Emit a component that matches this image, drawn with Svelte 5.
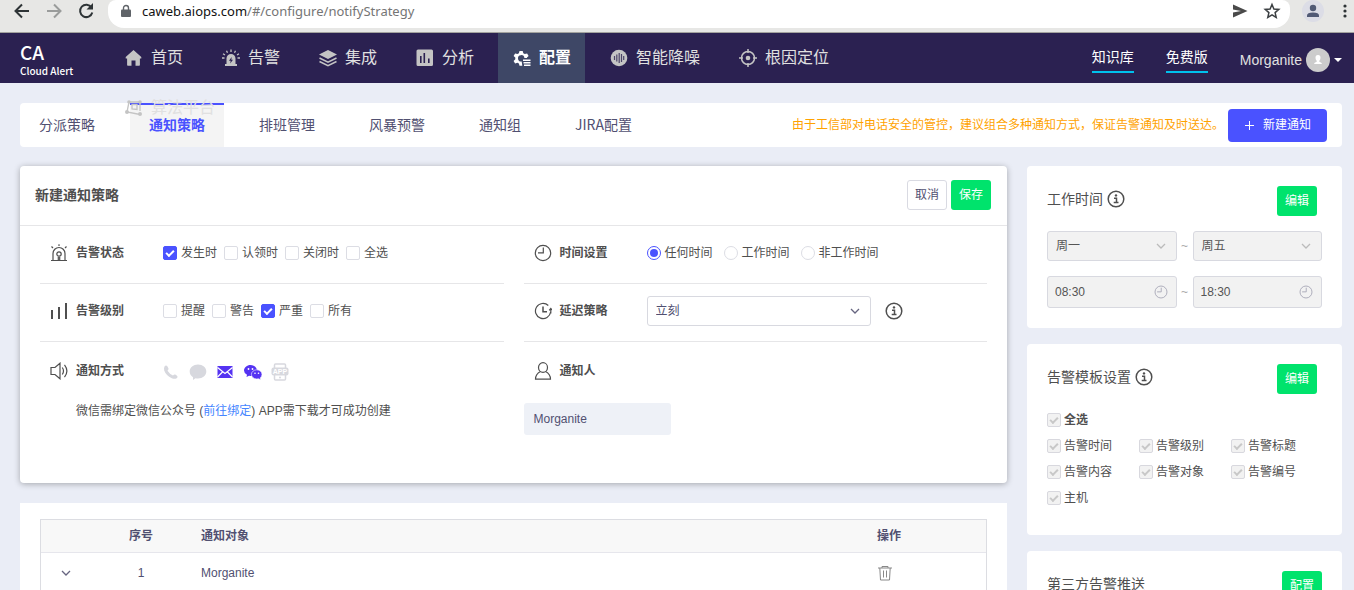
<script lang="ts">
  // Top navigation
  const navItems = [
    { name: "首页", icon: "home" },
    { name: "告警", icon: "alarm" },
    { name: "集成", icon: "layers" },
    { name: "分析", icon: "chart" },
    { name: "配置", icon: "config" },
    { name: "智能降噪", icon: "noise" },
    { name: "根因定位", icon: "target" },
    { name: "算法平台", icon: "graph" }
  ];

  const tabs = ["分派策略", "通知策略", "排班管理", "风暴预警", "通知组", "JIRA配置"];

  // Form state
  let activeNav = $state("配置");
  let activeTab = $state("通知策略");
  let timeType = $state("任何时间");
  let delay = $state("立刻");

  let statuses = $state([
    { name: "发生时", checked: true },
    { name: "认领时", checked: false },
    { name: "关闭时", checked: false },
    { name: "全选", checked: false }
  ]);

  let levels = $state([
    { name: "提醒", checked: false },
    { name: "警告", checked: false },
    { name: "严重", checked: true },
    { name: "所有", checked: false }
  ]);

  const timeTypes = ["任何时间", "工作时间", "非工作时间"];
  const templateFields = ["告警时间", "告警级别", "告警标题", "告警内容", "告警对象", "告警编号", "主机"];
  const rows = [{ id: 1, target: "Morganite" }];
</script>

{#snippet navIcon(icon: string)}
  <svg class="nav-icon" viewBox="0 0 18 18" fill="currentColor" aria-hidden="true">
    {#if icon === "home"}
      <path d="M8.500 1 .7 8v1.400h1.400V16q0 .8.800.800h3.600v-5.400h4v5.400h3.600q.8 0 .8-.8V9.400h1.400V8z" />
    {:else if icon === "alarm"}
      <path fill-rule="evenodd" d="M4.500 15V9.500a4.500 4.500 0 0 1 9 0V15h1.500v2H3v-2zM9.700 8 7 11.800h1.700L8.200 14.500 11 10.700H9.300z" />
      <path d="M9 .5V3M4.500 1.700l1 2M13.500 1.700l-1 2M1 4.800l2 1.200M17 4.800 15 6M0 9h2.500M15.500 9H18" fill="none" stroke="currentColor" stroke-width="1.300" />
    {:else if icon === "layers"}
      <path d="M9 1 18 5.500 9 10 0 5.500z" />
      <path d="M.5 9 9 13.200 17.500 9M.5 12.500 9 16.700l8.500-4.200" fill="none" stroke="currentColor" stroke-width="1.500" />
    {:else if icon === "chart"}
      <path fill-rule="evenodd" d="M2 .5h13.500q1.500 0 1.500 1.500v13.500q0 1.500-1.500 1.500H2q-1.500 0-1.500-1.500V2Q.5.5 2 .5zM4 7v7h1.600V7zm3.500-3v10h1.600V4zM12 9.500V14h1.600V9.500z" />
    {:else if icon === "config"}
      <path d="M9.300 16.800H6.500l-.6-2.200-1.500-.8-2.300.7-1.500-2.600 1.700-1.600V8.600L.6 7l1.500-2.600 2.300.7 1.500-.8.600-2.300h3.200l.6 2.300 1.500.8 2.300-.7L15.600 7 14 8.600v.5h-2.600a3.200 3.200 0 1 0-2.700 3.400z" />
      <path d="M10 10.500h7.500v1.500H10zM10.500 13h7v1.500h-7zM11 15.500h6.500V17H11z" />
    {:else if icon === "noise"}
      <circle cx="9" cy="9" r="8.300" />
      <path d="M4.500 7v4M6.800 5.500v7M9.200 4v10M11.500 5v8M13.700 7v4" fill="none" stroke="#4c4468" stroke-width="1.200" />
    {:else if icon === "target"}
      <circle cx="9" cy="9" r="6.500" fill="none" stroke="currentColor" stroke-width="1.500" />
      <circle cx="9" cy="9" r="2.300" />
      <path d="M9 0v4M9 14v4M0 9h4M14 9h4" stroke="currentColor" stroke-width="1.500" />
    {:else}
      <path d="M4 3h11v9M4 3 2 13l13 2.500M7 5.500h5v5l-5-.5z" fill="none" stroke="currentColor" stroke-width="1.300" />
      <circle cx="4" cy="3" r="1.800" /><circle cx="15" cy="3" r="1.800" /><circle cx="2" cy="13" r="2" /><circle cx="15" cy="15" r="2" />
    {/if}
  </svg>
{/snippet}

{#snippet infoIcon()}
  <svg class="info" viewBox="0 0 18 18" aria-hidden="true">
    <circle cx="9" cy="9" r="7.800" fill="none" stroke="#4f4f4f" stroke-width="1.500" />
    <path d="M7 8.200h2.500v4M6.700 12.600h4.800" fill="none" stroke="#4f4f4f" stroke-width="1.500" />
    <circle cx="9" cy="5.400" r="1.200" fill="#4f4f4f" />
  </svg>
{/snippet}

{#snippet clock()}
  <svg class="clock" viewBox="0 0 18 18" fill="none" stroke="currentColor" stroke-width="1.200" aria-hidden="true">
    <circle cx="9" cy="9" r="7.700" />
    <path d="M9.300 3.500v5.300H4" />
  </svg>
{/snippet}

{#snippet chevron()}
  <svg class="chevron" viewBox="0 0 10 10" fill="none" stroke="currentColor" stroke-width="1.300" aria-hidden="true">
    <path d="M1 3l4 4 4-4" />
  </svg>
{/snippet}

<div class="page">
  <div class="browser">
    <button class="tool" aria-label="Back">
      <svg viewBox="0 0 20 20" fill="none" stroke="#2e3436" stroke-width="2"><path d="M17 11H4M10 4.500 3.500 11l6.500 6.500" /></svg>
    </button>
    <button class="tool" aria-label="Forward">
      <svg viewBox="0 0 20 20" fill="none" stroke="#9a9c9b" stroke-width="2"><path d="M3 11h13M10 4.500l6.500 6.500-6.500 6.500" /></svg>
    </button>
    <button class="tool" aria-label="Reload">
      <svg viewBox="0 0 20 20" fill="none" stroke="#2e3436" stroke-width="2"><path d="M15.500 7.500a6.200 6.200 0 1 0 .8 5" /><path d="M17 3v6.500h-6.500z" fill="#2e3436" stroke="none" /></svg>
    </button>
    <div class="address">
      <svg class="lock" viewBox="0 0 10 14"><path d="M1 5.500h8q1 0 1 1v5.500q0 1-1 1H1q-1 0-1-1V6.500q0-1 1-1z" fill="#5f6368" /><path d="M2.500 6V4a2.500 2.500 0 0 1 5 0v2" fill="none" stroke="#5f6368" stroke-width="1.400" /></svg>
      <div class="url"><span>caweb.aiops.com</span>/#/configure/notifyStrategy</div>
      <button class="tool" aria-label="Send">
        <svg viewBox="0 0 20 20" fill="#4a4a4a"><path d="M3 3.500 17.500 10 3 16.500v-5L11 10 3 8.500z" /></svg>
      </button>
      <button class="tool" aria-label="Bookmark">
        <svg viewBox="0 0 20 20" fill="none" stroke="#3c4043" stroke-width="1.500"><path d="m10 3.500 1.900 4.500 4.900.4-3.700 3.200 1.100 4.800-4.200-2.600-4.200 2.600 1.100-4.800-3.700-3.200 4.900-.4z" /></svg>
      </button>
    </div>
    <button class="profile" aria-label="Profile">
      <svg viewBox="0 0 20 20" fill="#515a75"><circle cx="10" cy="7" r="3.200" /><path d="M4 16v-1.500q0-3 6-3t6 3V16z" /></svg>
    </button>
    <button class="dots" aria-label="Menu">
      <svg viewBox="0 0 4 16" fill="#2e3436"><circle cx="2" cy="3" r="1.600" /><circle cx="2" cy="8" r="1.600" /><circle cx="2" cy="13" r="1.600" /></svg>
    </button>
  </div>

  <header>
    <div class="logo">
      <strong>CA</strong>
      <span>Cloud Alert</span>
    </div>
    <nav>
      {#each navItems as item}
        <a href="#{item.icon}" class:active={activeNav === item.name} onclick={() => (activeNav = item.name)}>
          {@render navIcon(item.icon)}
          {item.name}
        </a>
      {/each}
    </nav>
    <div class="account">
      <a href="#docs">知识库</a>
      <a href="#plan">免费版</a>
      <button class="user">
        Morganite
        <svg class="avatar" viewBox="0 0 24 24"><circle cx="12" cy="12" r="12" fill="#ccc" /><path d="M12 7q2.700 0 2.500 3-.2 2-1.200 2.800v1q2.700.7 2.700 2.200H8q0-1.500 2.700-2.200v-1q-1-.8-1.200-2.800-.2-3 2.500-3z" fill="#fff" /></svg>
        <span class="caret"></span>
      </button>
    </div>
  </header>

  <div class="tabs">
    {#each tabs as tab}
      <button class="tab" class:active={activeTab === tab} onclick={() => (activeTab = tab)}>{tab}</button>
    {/each}
    <p class="warning">由于工信部对电话安全的管控，建议组合多种通知方式，保证告警通知及时送达。</p>
    <button class="create">
      <svg viewBox="0 0 10 10" stroke="#fff" stroke-width="1"><path d="M5.500 1v9M1 5.500h9" /></svg>
      新建通知
    </button>
  </div>

  <main>
    <div class="left">
      <form class="card strategy" onsubmit={(e) => e.preventDefault()}>
        <div class="strategy-head">
          <h2>新建通知策略</h2>
          <button type="button" class="cancel">取消</button>
          <button type="submit" class="green">保存</button>
        </div>

        <div class="strategy-body">
          <div class="column">
            <div class="row">
              <svg class="row-icon" viewBox="0 0 18 18"><path d="M3 16.500V9.500a6 6 0 0 1 12 0v7M1 16.500h16M8.300 16.500v-3.800M9.700 16.500v-3.800M9 .3V2M1.500 2.500l1.500 1.500M16.500 2.500 15 4" /><circle cx="9" cy="10" r="2.200" /></svg>
              <span class="label">告警状态</span>
              <div class="options">
                {#each statuses as s}
                  <label><input type="checkbox" bind:checked={s.checked} />{s.name}</label>
                {/each}
              </div>
            </div>
            <div class="row">
              <svg class="row-icon bars" viewBox="0 0 18 18"><path d="M2 8v9M9 5v12M16 1v16" /></svg>
              <span class="label">告警级别</span>
              <div class="options">
                {#each levels as l}
                  <label><input type="checkbox" bind:checked={l.checked} />{l.name}</label>
                {/each}
              </div>
            </div>
            <div class="row">
              <svg class="row-icon" viewBox="0 0 18 18"><path d="M1 5.500h4L10 1.200v15.600L5 12.500H1zM12.300 5.500q2.400 3.500 0 7M14.500 2.800q4.800 6.200 0 12.400" /></svg>
              <span class="label">通知方式</span>
              <div class="methods">
                <button type="button" aria-label="电话">
                  <svg viewBox="0 0 18 18" fill="#d7d8de"><path d="M1.500 3.500Q3 1.500 4.500 3.500l1 2q.3 1-1 2.300Q6.500 11 10 12.500q1.200-1.500 2.300-1l1.700 1.200q1.500 1.200-.3 2.500-2 1.300-4.900 0Q3 12.500 1.200 7.500.7 4.800 1.500 3.500z" /></svg>
                </button>
                <button type="button" aria-label="短信">
                  <svg viewBox="0 0 18 18" fill="#d7d8de"><path d="M8 1.500c4.700 0 8.300 3.100 8.300 7s-3.600 7-8.300 7q-1.200 0-2.500-.3L3 17v-2.800Q-.3 12.200-.3 8.500c0-3.900 3.600-7 8.300-7z" /></svg>
                </button>
                <button type="button" aria-label="邮件">
                  <svg viewBox="0 0 18 18"><path d="M.5 3h15v12H.5z" fill="#5533f2" /><path d="m.5 4.500 7.500 6 7.500-6M.5 14l5-5M15.500 14l-5-5" fill="none" stroke="#fff" stroke-width="1.200" /></svg>
                </button>
                <button type="button" aria-label="微信">
                  <svg viewBox="0 0 18 18"><path d="M6.500 2C10 2 13 4.500 13 7.500S10 13 6.500 13l-1.500-.2L2.500 14l.5-2.300Q0 10.300 0 7.500C0 4.500 3 2 6.500 2z" fill="#5533f2" /><path d="M12.700 6.800c3 0 5.300 2.200 5.300 4.600q0 2-1.700 3.500l.4 1.900-2.200-1-1.800.2c-3 0-5.300-2.200-5.300-4.600s2.300-4.600 5.300-4.600z" fill="#5533f2" stroke="#fff" stroke-width=".6" /><g fill="#fff"><circle cx="4.500" cy="6" r=".9" /><circle cx="8.500" cy="6" r=".9" /><circle cx="11" cy="10.200" r=".8" /><circle cx="14.500" cy="10.200" r=".8" /></g></svg>
                </button>
                <button type="button" aria-label="APP">
                  <svg viewBox="0 0 18 18"><path d="M3.500 5V2q0-1 1-1h9q1 0 1 1v3M3.500 12v4q0 1 1 1h9q1 0 1-1v-4" fill="none" stroke="#d7d8de" stroke-width="1.500" /><rect x=".5" y="4.500" width="17" height="8" rx="2" fill="#d7d8de" /><circle cx="9" cy="14.500" r="1" fill="#d7d8de" /><text x="9" y="11" text-anchor="middle" font-size="7" font-weight="bold" fill="#fff">APP</text></svg>
                </button>
              </div>
            </div>
            <p class="hint">微信需绑定微信公众号 (<a href="#bind">前往绑定</a>) APP需下载才可成功创建</p>
          </div>

          <div class="column">
            <div class="row">
              <span class="row-icon">{@render clock()}</span>
              <span class="label">时间设置</span>
              <div class="options radios">
                {#each timeTypes as t}
                  <label><input type="radio" name="time" value={t} bind:group={timeType} />{t}</label>
                {/each}
              </div>
            </div>
            <div class="row">
              <svg class="row-icon" viewBox="0 0 18 18"><path d="M14.300 3.500A7.600 7.600 0 1 0 16.600 10M16.800 6.500v5M15.200 8.300 16.800 6.500l1.200 1.500" /><path d="M9 4.500v5.300h4" stroke-width="1.500" /></svg>
              <label class="label" for="delay">延迟策略</label>
              <div class="select delay">
                <select id="delay" bind:value={delay}>
                  <option>立刻</option>
                </select>
                {@render chevron()}
              </div>
              {@render infoIcon()}
            </div>
            <div class="row">
              <svg class="row-icon" viewBox="0 0 18 18"><ellipse cx="9" cy="5.500" rx="4.500" ry="4.800" /><path d="M6.500 9.500Q1.500 12 1.500 17.200h15q0-5.200-5-7.700" /></svg>
              <span class="label">通知人</span>
            </div>
            <div class="person">Morganite</div>
          </div>
        </div>
      </form>

      <section class="list">
        <table>
          <thead>
            <tr>
              <th class="expand"></th>
              <th class="index">序号</th>
              <th>通知对象</th>
              <th class="action">操作</th>
            </tr>
          </thead>
          <tbody>
            {#each rows as row}
              <tr>
                <td class="expand"><button aria-label="展开">{@render chevron()}</button></td>
                <td class="index">{row.id}</td>
                <td>{row.target}</td>
                <td class="action">
                  <button aria-label="删除">
                    <svg class="trash" viewBox="0 0 16 16" fill="none" stroke="#888"><path d="M1 3h14M5 3V1.500h6V3M2.800 3l.7 12h9l.7-12M6.500 5.500v7M9.500 5.500v7" /></svg>
                  </button>
                </td>
              </tr>
            {/each}
          </tbody>
        </table>
      </section>
    </div>

    <aside>
      <section class="card side">
        <div class="side-head">
          <h3>工作时间</h3>
          {@render infoIcon()}
          <button class="green inset">编辑</button>
        </div>
        <div class="range">
          <div class="select">
            <select aria-label="开始日" disabled><option>周一</option></select>
            {@render chevron()}
          </div>
          <span>~</span>
          <div class="select">
            <select aria-label="结束日" disabled><option>周五</option></select>
            {@render chevron()}
          </div>
        </div>
        <div class="range">
          <div class="select time">
            <input type="text" aria-label="开始时间" value="08:30" disabled />
            {@render clock()}
          </div>
          <span>~</span>
          <div class="select time">
            <input type="text" aria-label="结束时间" value="18:30" disabled />
            {@render clock()}
          </div>
        </div>
      </section>

      <section class="card side template">
        <div class="side-head">
          <h3>告警模板设置</h3>
          {@render infoIcon()}
          <button class="green inset">编辑</button>
        </div>
        <div class="fields">
          <label class="all"><input type="checkbox" checked disabled />全选</label>
          {#each templateFields as field}
            <label><input type="checkbox" checked disabled />{field}</label>
          {/each}
        </div>
      </section>

      <section class="card side">
        <div class="side-head">
          <h3>第三方告警推送</h3>
          <button class="green">配置</button>
        </div>
      </section>
    </aside>
  </main>
</div>

<style>
  :global(body) {
    margin: 0;
    background: #eaedf6;
  }

  .page {
    height: 100vh;
    overflow: hidden;
    font-family: "Liberation Sans", "Noto Sans CJK SC", sans-serif;
    font-size: 12px;
    line-height: 18px;
    color: #4f4f4f;
  }

  .page *,
  .page *::before {
    box-sizing: border-box;
  }

  button,
  input,
  select {
    font: inherit;
    color: inherit;
    margin: 0;
  }

  button {
    padding: 0;
    border: none;
    background: none;
    cursor: pointer;
  }

  svg {
    display: block;
    flex: none;
  }

  h2,
  h3,
  p {
    margin: 0;
  }

  /* Browser toolbar */
  .browser {
    display: flex;
    align-items: flex-start;
    gap: 12px;
    height: 33px;
    padding: 0 7px 0 12px;
    background: #e7e7e5;
    border-bottom: 1px solid #a3a39f;
  }

  .tool svg {
    width: 20px;
    height: 20px;
  }

  .address {
    display: flex;
    align-items: center;
    gap: 12px;
    flex: 1;
    height: 28px;
    padding: 0 8px 6px 13px;
    background: #fff;
    border-radius: 8px 8px 16px 16px;
  }

  .lock {
    width: 10px;
    height: 14px;
  }

  .url {
    flex: 1;
    margin-left: -1px;
    font-family: "Noto Sans", sans-serif;
    font-size: 13px;
    color: #757575;
  }

  .url span {
    color: #111;
  }

  .profile {
    background: #dcdde6;
    border-radius: 50%;
  }

  .profile svg {
    width: 20px;
    height: 20px;
    margin: 1px;
  }

  .dots svg {
    width: 4px;
    height: 16px;
    margin: 3px 0 0 7px;
  }

  /* Header */
  header {
    display: flex;
    height: 50px;
    padding: 0 12px 0 20px;
    background: #2b2151;
    color: #e0e0e0;
  }

  .logo {
    width: 90px;
    padding-top: 6px;
    font-family: "Noto Sans CJK SC", sans-serif;
    font-weight: 500;
    color: #fff;
  }

  .logo strong,
  .logo span {
    display: block;
  }

  .logo strong {
    font-size: 19px;
    font-weight: 500;
    line-height: 26px;
  }

  .logo span {
    font-size: 10px;
    line-height: 12px;
  }

  /* items that do not fit wrap below the bar, over the page */
  nav {
    display: flex;
    flex-wrap: wrap;
    align-content: flex-start;
    column-gap: 10px;
    flex: 1;
    z-index: 1;
  }

  nav a {
    display: flex;
    align-items: center;
    gap: 8px;
    height: 50px;
    padding: 0 14px 0 15px;
    font-size: 16px;
    color: #e0e0e0;
    text-decoration: none;
  }

  nav a.active {
    background: #3e4766;
    color: #fff;
    font-weight: bold;
  }

  .nav-icon {
    width: 18px;
    height: 18px;
    color: #c4c4c4;
  }

  .active .nav-icon {
    color: #fff;
  }

  .account {
    display: flex;
    align-items: center;
    gap: 32px;
    margin-left: 160px;
  }

  .account a {
    padding: 4px 0;
    border-bottom: 2px solid #00c1ec;
    font-size: 14px;
    line-height: 20px;
    color: #fff;
    text-decoration: none;
  }

  .user {
    display: flex;
    align-items: center;
    gap: 4px;
    padding-top: 3px;
    font-size: 14px;
  }

  .avatar {
    width: 24px;
    height: 24px;
  }

  .caret {
    border: 4px solid transparent;
    border-top-color: #fff;
    border-bottom: none;
  }

  /* Tabs */
  .tabs {
    display: flex;
    align-items: center;
    gap: 16px;
    height: 44px;
    margin: 20px 12px 19px 20px;
    padding-right: 15px;
    background: #fff;
    border-radius: 4px;
  }

  .tab {
    height: 44px;
    padding: 0 19px 2px;
    font-family: "Noto Sans CJK SC", sans-serif;
    font-size: 14px;
    color: #515071;
  }

  .tab.active {
    background: #f4f4f4;
    box-shadow: inset 0 2px #4a52ff;
    color: #4a52ff;
    font-weight: bold;
  }

  .warning {
    flex: 1;
    text-align: right;
    color: #ffa200;
  }

  .create {
    display: flex;
    align-items: center;
    justify-content: center;
    gap: 9px;
    width: 99px;
    height: 33px;
    margin-left: -12px;
    background: #4a52ff;
    border-radius: 4px;
    color: #fff;
  }

  .create svg {
    width: 10px;
    height: 10px;
  }

  /* Layout */
  main {
    display: flex;
    align-items: flex-start;
    gap: 20px;
    padding: 0 12px 20px 20px;
  }

  .left {
    flex: 1;
  }

  aside {
    display: flex;
    flex-direction: column;
    gap: 16px;
    width: 315px;
  }

  .card {
    background: #fff;
    border-radius: 4px;
  }

  .green,
  .cancel {
    width: 40px;
    height: 30px;
    border-radius: 3px;
  }

  .green {
    background: #00e36c;
    color: #fff;
  }

  .cancel {
    border: 1px solid #d9dae2;
    color: #515071;
  }

  /* Strategy form */
  .strategy {
    min-height: 317px;
    box-shadow: 0 1px 6px rgba(0, 0, 0, 0.3);
  }

  .strategy-head {
    display: flex;
    align-items: center;
    gap: 4px;
    height: 60px;
    padding: 0 16px 1px 15px;
    border-bottom: 1px solid #e6e6e8;
  }

  .strategy-head h2 {
    flex: 1;
    font-size: 14px;
  }

  .strategy-body {
    display: flex;
    gap: 20px;
    padding: 0 20px;
  }

  .column {
    flex: 1;
  }

  .row {
    display: flex;
    align-items: center;
    height: 58px;
    padding: 0 0 3px 10px;
    border-bottom: 1px solid #e6e6e8;
  }

  .row:nth-child(3) {
    padding-bottom: 0;
    border-bottom: none;
  }

  .row-icon {
    width: 18px;
    height: 18px;
    margin-right: 8px;
    fill: none;
    stroke: #4f4f4f;
    stroke-width: 1.200;
  }

  .bars {
    stroke-width: 2;
  }

  .clock {
    width: 100%;
    height: 100%;
  }

  .label {
    width: 87px;
    font-weight: bold;
  }

  .options {
    display: flex;
    gap: 7px;
  }

  .radios {
    gap: 11px;
  }

  .options label,
  .fields label {
    display: flex;
    align-items: center;
    gap: 4px;
  }

  input[type="checkbox"],
  input[type="radio"] {
    display: grid;
    place-items: center;
    width: 14px;
    height: 14px;
    appearance: none;
    border: 1px solid #dcdde4;
    border-radius: 2px;
    background: #fff;
  }

  input[type="checkbox"]:checked {
    background: #4a52ff;
    border-color: #4a52ff;
  }

  input[type="checkbox"]:checked::before {
    content: "";
    width: 8px;
    height: 5px;
    margin-bottom: 2px;
    border: solid #fff;
    border-width: 0 0 2px 2px;
    transform: rotate(-45deg);
  }

  input[type="checkbox"]:disabled {
    background: #f2f2f2;
    border-color: #d8d8de;
  }

  input[type="checkbox"]:disabled::before {
    border-color: #c8c8c8;
  }

  input[type="radio"] {
    border-radius: 50%;
  }

  input[type="radio"]:checked {
    border-color: #4a52ff;
  }

  input[type="radio"]:checked::before {
    content: "";
    width: 8px;
    height: 8px;
    background: #4a52ff;
    border-radius: 50%;
  }

  .methods {
    display: flex;
    gap: 9px;
    padding-top: 2px;
  }

  .methods svg {
    width: 18px;
    height: 18px;
    overflow: visible;
  }

  .hint {
    padding: 2px 0 0 36px;
  }

  .hint a {
    color: #4585ff;
    text-decoration: none;
  }

  .select {
    display: flex;
    position: relative;
    flex: 1;
    height: 30px;
  }

  .select select,
  .select input {
    width: 100%;
    padding: 0 8px;
    appearance: none;
    border: 1px solid #d8d9e0;
    border-radius: 3px;
    background: #fff;
    color: #515071;
  }

  .select input {
    padding: 0 7px;
  }

  .select :disabled {
    background: #f2f2f2;
    color: #555;
    opacity: 1;
  }

  .chevron {
    width: 10px;
    height: 10px;
    color: #666580;
  }

  .select .chevron {
    position: absolute;
    top: 10px;
    right: 11px;
    pointer-events: none;
  }

  .range .chevron {
    color: #bbb;
  }

  .delay {
    flex: none;
    width: 224px;
    margin-right: 14px;
  }

  .info {
    width: 18px;
    height: 18px;
  }

  .person {
    width: 147px;
    height: 32px;
    margin-top: 3px;
    padding: 7px 10px;
    background: #eef1f7;
    border-radius: 3px;
    color: #515071;
  }

  /* Table */
  .list {
    margin-top: 20px;
    padding: 16px 20px;
    background: #fff;
  }

  table {
    width: 100%;
    border: 1px solid #dcdde2;
    border-spacing: 0;
    table-layout: fixed;
    color: #515071;
  }

  th {
    height: 33px;
    background: #f8f8f8;
    border-bottom: 1px solid #e6e6ec;
  }

  td {
    height: 40px;
  }

  th,
  td {
    padding: 0 10px;
    text-align: left;
  }

  .expand {
    width: 50px;
  }

  .expand button {
    display: grid;
    place-items: center;
    width: 100%;
  }

  .index {
    width: 100px;
    text-align: center;
  }

  .action {
    width: 119px;
  }

  .action button {
    display: block;
  }

  .trash {
    width: 16px;
    height: 16px;
  }

  /* Side cards */
  .side {
    padding: 20px;
  }

  .side-head {
    display: flex;
    align-items: center;
    gap: 4px;
    height: 30px;
  }

  .side-head h3 {
    font-size: 14px;
    font-weight: normal;
    line-height: 26px;
  }

  .side-head h3,
  .side-head .info {
    margin-bottom: 4px;
  }

  .side-head .green {
    margin-left: auto;
  }

  .side-head .inset {
    margin-right: 5px;
  }

  .range {
    display: flex;
    align-items: center;
    margin-top: 15px;
  }

  .range span {
    width: 16px;
    text-align: center;
    color: #aaa;
  }

  .time {
    height: 32px;
  }

  .time .clock {
    position: absolute;
    top: 9px;
    right: 9px;
    width: 14px;
    height: 14px;
    color: #a9a9b8;
  }

  .template {
    min-height: 191px;
  }

  .fields {
    display: grid;
    grid-template-columns: repeat(3, 92px);
    grid-auto-rows: 26px;
    margin-top: 13px;
  }

  .fields label {
    gap: 3px;
  }

  .fields .all {
    grid-column: 1 / -1;
    font-weight: bold;
  }
</style>
